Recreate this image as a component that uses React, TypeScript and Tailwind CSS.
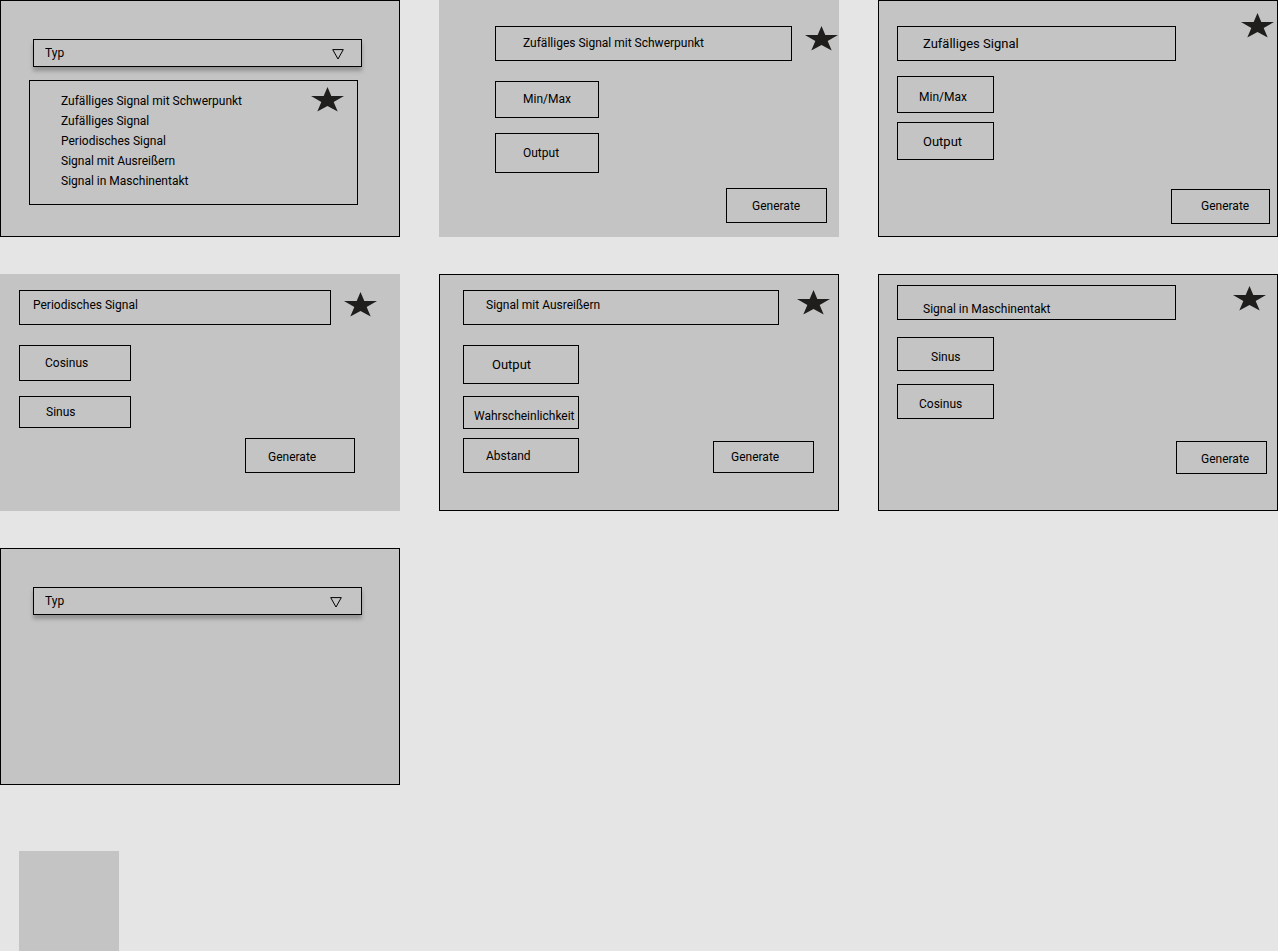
import type { ReactNode } from "react";

function Star({ className = "" }: { className?: string }) {
  return (
    <svg
      viewBox="0.5 0 33 25"
      aria-hidden="true"
      className={`h-[25px] w-[33px] shrink-0 fill-[#1f1e1c] ${className}`}
    >
      <polygon points="17,0 20.82,9 33.5,9 23.17,15.09 27.2,24.6 17,18.9 6.8,24.6 10.83,15.09 0.5,9 13.18,9" />
    </svg>
  );
}

function Panel({
  outlined = false,
  className = "",
  children,
}: {
  outlined?: boolean;
  className?: string;
  children?: ReactNode;
}) {
  return (
    <section
      className={`flex min-h-[237px] flex-col border bg-[#c4c4c4] ${
        outlined ? "border-black" : "border-transparent"
      } ${className}`}
    >
      {children}
    </section>
  );
}

function TypeSelect({ id, arrow }: { id: string; arrow: string }) {
  return (
    <div className="relative mr-[37px] ml-8">
      <select
        id={id}
        aria-label="Typ"
        className="block h-7 w-full appearance-none border border-black bg-[#c4c4c4] pl-[11px] text-xs shadow-[0_4px_4px_rgba(0,0,0,0.25)]"
      >
        <option>Typ</option>
      </select>
      <svg
        viewBox="0 0 12 11"
        aria-hidden="true"
        className={`pointer-events-none absolute top-2.5 h-[11px] w-3 fill-none stroke-black ${arrow}`}
      >
        <path d="M0.7 0.6H11.3L6 10Z" />
      </svg>
    </div>
  );
}

function Title({ className, children }: { className: string; children: ReactNode }) {
  return (
    <h2 className={`flex h-[35px] flex-1 items-center border border-black ${className}`}>
      {children}
    </h2>
  );
}

function Action({ className, children }: { className: string; children: ReactNode }) {
  return (
    <button
      type="button"
      className={`flex shrink-0 items-center border border-black whitespace-nowrap ${className}`}
    >
      {children}
    </button>
  );
}

const signalTypes = [
  "Zufälliges Signal mit Schwerpunkt",
  "Zufälliges Signal",
  "Periodisches Signal",
  "Signal mit Ausreißern",
  "Signal in Maschinentakt",
];

export default function App() {
  return (
    <main className="min-h-screen bg-[#e5e5e5] font-[Roboto,sans-serif] text-xs text-black">
      <div className="grid grid-cols-3 gap-x-[39px] gap-y-[37px]">
        <Panel outlined className="pt-[38px]">
          <TypeSelect id="type-open" arrow="right-[18px]" />
          <div className="mt-[13px] mr-[41px] ml-7 flex h-[125px] items-start border border-black pt-1.5 pr-[13px] pl-[31px]">
            <ul className="flex-1 pt-1 leading-5">
              {signalTypes.map((type) => (
                <li key={type}>{type}</li>
              ))}
            </ul>
            <Star />
          </div>
        </Panel>

        <Panel className="pt-[25px] pl-[55px]">
          <div className="flex items-start gap-[13px]">
            <Title className="pb-0.5 pl-[27px]">Zufälliges Signal mit Schwerpunkt</Title>
            <Star />
          </div>
          <div className="mt-5 flex flex-1 items-end justify-between pr-[11px] pb-[13px]">
            <div className="flex flex-col gap-[15px] self-start">
              <Action className="h-[37px] w-[104px] pb-0.5 pl-[27px]">Min/Max</Action>
              <Action className="h-10 w-[104px] pl-[27px]">Output</Action>
            </div>
            <Action className="h-[35px] w-[101px] pl-[25px]">Generate</Action>
          </div>
        </Panel>

        <Panel outlined className="pt-3 pr-[3px] pl-[18px]">
          <div className="flex items-start gap-[65px]">
            <Title className="mt-[13px] pl-[25px] text-[13px]">Zufälliges Signal</Title>
            <Star />
          </div>
          <div className="mt-[15px] flex flex-1 items-end justify-between pr-1 pb-3">
            <div className="flex flex-col gap-[9px] self-start">
              <Action className="h-[37px] w-[97px] pt-1 pl-[21px]">Min/Max</Action>
              <Action className="h-[38px] w-[97px] pt-0.5 pl-[25px] text-[13px]">Output</Action>
            </div>
            <Action className="h-[35px] w-[99px] pb-0.5 pl-[29px]">Generate</Action>
          </div>
        </Panel>

        <Panel className="pt-[15px] pr-[22px] pl-[18px]">
          <div className="flex items-start gap-[13px]">
            <Title className="pb-1.5 pl-[13px]">Periodisches Signal</Title>
            <Star className="mt-0.5" />
          </div>
          <div className="mt-5 flex flex-1 items-end justify-between pr-[22px] pb-[37px]">
            <div className="flex flex-col gap-[15px] self-start">
              <Action className="h-9 w-28 pl-[25px]">Cosinus</Action>
              <Action className="h-8 w-28 pl-[26px]">Sinus</Action>
            </div>
            <Action className="h-[35px] w-[110px] pt-0.5 pl-[22px]">Generate</Action>
          </div>
        </Panel>

        <Panel outlined className="pt-[15px] pr-2 pl-[23px]">
          <div className="flex items-start gap-[18px]">
            <Title className="pb-1.5 pl-[22px]">Signal mit Ausreißern</Title>
            <Star />
          </div>
          <div className="mt-5 flex flex-1 items-end justify-between pr-4 pb-[37px]">
            <div className="flex flex-col self-start">
              <Action className="h-[39px] w-[116px] pl-7 text-[13px]">Output</Action>
              <Action className="mt-3 h-[33px] w-[116px] pt-1.5 pl-2.5">Wahrscheinlichkeit</Action>
              <Action className="mt-[9px] h-[35px] w-[116px] pl-[22px]">Abstand</Action>
            </div>
            <Action className="h-8 w-[101px] pl-[17px]">Generate</Action>
          </div>
        </Panel>

        <Panel outlined className="pt-2.5 pr-2.5 pl-[18px]">
          <div className="flex items-start gap-[57px] pr-px">
            <Title className="pt-3 pl-[25px]">Signal in Maschinentakt</Title>
            <Star className="mt-px" />
          </div>
          <div className="mt-[17px] flex flex-1 items-end justify-between pb-9">
            <div className="flex flex-col gap-[13px] self-start">
              <Action className="h-[34px] w-[97px] pt-1.5 pl-[33px]">Sinus</Action>
              <Action className="h-[35px] w-[97px] pt-1 pl-[21px]">Cosinus</Action>
            </div>
            <Action className="h-[33px] w-[91px] pt-0.5 pl-6">Generate</Action>
          </div>
        </Panel>

        <Panel outlined className="pt-[38px]">
          <TypeSelect id="type-closed" arrow="right-5" />
        </Panel>
      </div>
      <div className="mt-[66px] ml-[19px] size-[100px] bg-[#c4c4c4]" />
    </main>
  );
}
